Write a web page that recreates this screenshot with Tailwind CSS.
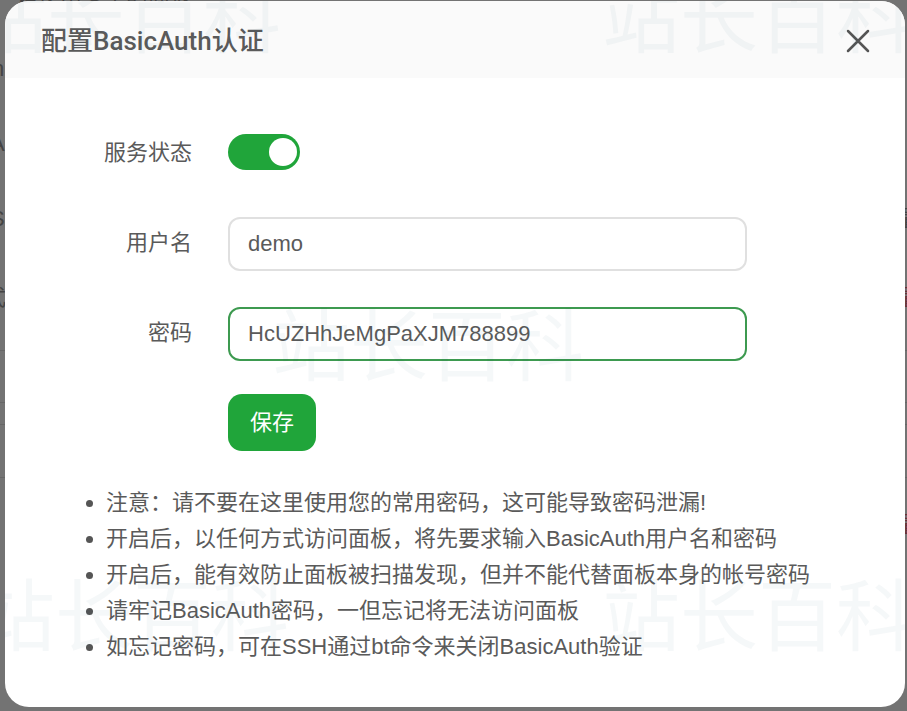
<!DOCTYPE html>
<html lang="zh-CN">
<head>
    <meta charset="UTF-8">
    <meta name="viewport" content="width=device-width, initial-scale=1.0">
    <title>配置BasicAuth认证</title>
    <script src="https://cdn.jsdelivr.net/npm/@tailwindcss/browser@4"></script>
</head>
<body class="relative flex min-h-screen overflow-x-hidden bg-[#737373] pt-px pr-[2px] pb-1 pl-[5px] font-['Liberation_Sans','Noto_Sans_CJK_SC',sans-serif] text-[22px] text-[#5a5a5a]">
    <!-- Page behind the dialog -->
    <div class="absolute inset-0 overflow-hidden leading-none text-[#444]" aria-hidden="true">
        <span class="absolute top-[58px] -left-2">n</span>
        <span class="absolute top-[133px] -left-2.5">A</span>
        <span class="absolute top-[208px] -left-2.5">S</span>
        <span class="absolute top-[287px] -left-4">式</span>
        <span class="absolute -top-4 left-4">请使用安全的面板</span>
        <span class="absolute top-[208px] -right-4">置</span>
        <span class="absolute top-[287px] -right-4 text-[#6b3038]">置</span>
        <span class="absolute top-[514px] -right-4 text-[#6b3038]">置</span>
        <span class="absolute top-[350px] h-px w-full bg-[#666]"></span>
        <span class="absolute top-[402px] h-px w-full bg-[#666]"></span>
        <span class="absolute top-[424px] h-px w-full bg-[#666]"></span>
        <span class="absolute top-[477px] h-px w-full bg-[#666]"></span>
    </div>

    <div role="dialog" aria-labelledby="dialog-title" class="relative flex-1 overflow-hidden rounded-[24px] bg-white">
        <header class="flex h-[77px] items-center justify-between bg-[#fafafa] pt-[3px] pr-[34px] pl-9">
            <h1 id="dialog-title" class="font-[Roboto,'Noto_Sans_CJK_SC',sans-serif] text-[26px] font-medium">配置BasicAuth认证</h1>
            <button type="button" id="close" aria-label="关闭" class="p-px">
                <svg class="size-6" viewBox="0 0 24 24" fill="none" stroke="#555" stroke-width="2.5" stroke-linecap="round">
                    <path d="M2 2l20 20M22 2L2 22"/>
                </svg>
            </button>
        </header>

        <form id="auth-form" class="pt-14 pr-[158px]">
            <div class="mb-[47px] flex h-9 items-center">
                <label for="status" class="w-[187px] shrink-0 text-right">服务状态</label>
                <input type="checkbox" id="status" checked
                       class="ml-9 h-9 w-[72px] appearance-none rounded-full bg-gray-300 p-1 pr-[3px] before:block before:size-7 before:rounded-full before:bg-white checked:bg-[#20a53a] checked:before:ml-auto">
            </div>
            <div class="mb-9 flex h-[54px] items-center">
                <label for="username" class="w-[187px] shrink-0 pb-1 text-right">用户名</label>
                <input type="text" id="username" name="username" value="demo"
                       class="ml-9 h-full min-w-0 flex-1 rounded-xl border-2 border-[#e0e0e0] px-[18px] outline-none focus:border-[#20a53a]">
            </div>
            <div class="mb-[33px] flex h-[54px] items-center">
                <label for="password" class="w-[187px] shrink-0 pb-1 text-right">密码</label>
                <input type="text" id="password" name="password" value="HcUZHhJeMgPaXJM788899"
                       class="ml-9 h-full min-w-0 flex-1 rounded-xl border-2 border-[#3d9a50] px-[18px] outline-none">
            </div>
            <button type="submit" class="ml-[223px] block h-[57px] rounded-[14px] bg-[#20a53a] px-[22px] text-white hover:bg-[#1b8f32]">保存</button>
        </form>

        <ul class="mt-[34px] mb-10 list-disc pl-[101px] leading-9 marker:text-[#555]">
            <li>注意：请不要在这里使用您的常用密码，这可能导致密码泄漏!</li>
            <li>开启后，以任何方式访问面板，将先要求输入BasicAuth用户名和密码</li>
            <li>开启后，能有效防止面板被扫描发现，但并不能代替面板本身的帐号密码</li>
            <li>请牢记BasicAuth密码，一但忘记将无法访问面板</li>
            <li>如忘记密码，可在SSH通过bt命令来关闭BasicAuth验证</li>
        </ul>

        <!-- Watermark -->
        <div class="pointer-events-none absolute inset-0 overflow-hidden text-[78px] leading-none font-normal whitespace-nowrap text-sky-900/4" aria-hidden="true">
            <span class="absolute -top-5 -left-9">站长百科</span>
            <span class="absolute -top-5 left-[597px]">站长百科</span>
            <span class="absolute top-[308px] left-[267px]">站长百科</span>
            <span class="absolute top-[578px] -left-7">站长百科</span>
            <span class="absolute top-[578px] left-[597px]">站长百科</span>
        </div>
    </div>

    <script>
        const dialog = document.querySelector('[role="dialog"]');

        document.getElementById('close').addEventListener('click', () => {
            dialog.remove();
        });

        document.getElementById('auth-form').addEventListener('submit', (e) => {
            e.preventDefault();
        });
    </script>
</body>
</html>
